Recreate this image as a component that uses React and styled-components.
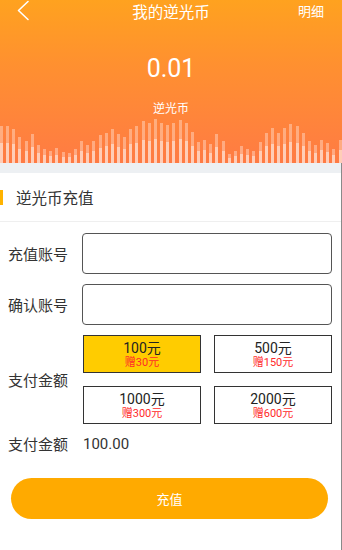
import React, { useState } from "react";
import styled, { createGlobalStyle } from "styled-components";

const GlobalStyle = createGlobalStyle`
  html, body { margin: 0; padding: 0; background: #fff; }
  body { font-family: Roboto, "Noto Sans CJK SC", "Noto Sans", sans-serif; }
  * { box-sizing: border-box; }
`;

const Page = styled.div`
  width: 342px;
  min-height: 550px;
  background: #fff;
  display: flex;
  flex-direction: column;
`;

const Header = styled.header`
  height: 163px;
  background: linear-gradient(180deg, #ffa21f 0%, #ff9030 40%, #ff7b44 100%);
  display: flex;
  flex-direction: column;
  color: #fff;
`;

const TopBar = styled.div`
  height: 22px;
  position: relative;
  display: flex;
  align-items: center;
  justify-content: center;
`;

const BackIcon = styled.svg`
  position: absolute;
  left: 16px;
  top: 0;
`;

const Title = styled.div`
  font-family: "Noto Sans CJK SC", sans-serif;
  font-size: 15.5px;
  line-height: 20px;
  color: #fff;
`;

const Detail = styled.div`
  position: absolute;
  right: 18px;
  top: 1px;
  font-family: "Noto Sans CJK SC", sans-serif;
  font-size: 13px;
  line-height: 20px;
`;

const Balance = styled.div`
  margin-top: 32px;
  text-align: center;
  font-size: 25px;
  line-height: 30px;
`;

const BalanceLabel = styled.div`
  margin-top: 16px;
  text-align: center;
  font-family: "Noto Sans CJK SC", sans-serif;
  font-size: 12px;
  line-height: 16px;
`;

const Bars = styled.div`
  flex: 1;
  display: flex;
  align-items: flex-end;
  justify-content: space-between;
`;

const Bar = styled.div`
  width: 3px;
  background: linear-gradient(
    to top,
    rgba(255, 255, 255, 0.62) 0%,
    rgba(255, 255, 255, 0.62) 55%,
    rgba(255, 255, 255, 0.34) 55%,
    rgba(255, 255, 255, 0.34) 100%
  );
`;

const Body = styled.div`
  flex: 1;
  display: flex;
  flex-direction: column;
  border-right: 1px solid #8a8a8a;
`;

const Band = styled.div`
  height: 10px;
  background: #edf0f3;
`;

const SectionTitle = styled.div`
  height: 49px;
  display: flex;
  align-items: center;
  border-bottom: 1px solid #efefef;
  font-family: "Noto Sans CJK SC", sans-serif;
  font-size: 15.5px;
  color: #333;
  &::before {
    content: "";
    width: 3px;
    height: 15px;
    background: #ffb300;
    margin-right: 13px;
  }
`;

const Form = styled.div`
  margin-top: 11px;
  padding: 0 9px 0 8px;
  display: flex;
  flex-direction: column;
  gap: 10px;
`;

const Row = styled.div`
  display: grid;
  grid-template-columns: 74px 1fr;
  align-items: center;
`;

const Label = styled.div`
  font-family: "Noto Sans CJK SC", sans-serif;
  font-size: 15px;
  color: #333;
`;

const Input = styled.input`
  height: 41px;
  border: 1px solid #555;
  border-radius: 4px;
  padding: 0 8px;
  font-size: 14px;
  outline: none;
  width: 100%;
`;

const Grid = styled.div`
  display: grid;
  grid-template-columns: 1fr 1fr;
  gap: 13px;
  padding-left: 1px;
`;

const Option = styled.div`
  height: 38px;
  border: 1px solid #333;
  background: ${(p) => (p.$active ? "#ffcc00" : "#fff")};
  display: flex;
  flex-direction: column;
  align-items: center;
  justify-content: center;
  cursor: pointer;
`;

const OptionPrice = styled.div`
  font-size: 14px;
  line-height: 16px;
  color: #222;
  font-family: Roboto, "Noto Sans CJK SC", sans-serif;
`;

const OptionGift = styled.div`
  font-size: 11px;
  line-height: 13px;
  color: #ff2a2a;
  font-family: Roboto, "Noto Sans CJK SC", sans-serif;
`;

const Summary = styled.div`
  display: grid;
  grid-template-columns: 74px 1fr;
  align-items: center;
  height: 21px;
  margin-top: 9px;
  padding-left: 8px;
`;

const Value = styled.div`
  font-size: 15px;
  color: #333;
  padding-left: 1px;
`;

const SubmitButton = styled.button`
  margin: 24px 13px 0 11px;
  height: 41px;
  border: none;
  border-radius: 21px;
  background: #ffaa00;
  color: #fff;
  font-family: "Noto Sans CJK SC", sans-serif;
  font-size: 13px;
  cursor: pointer;
`;

const heights = [
  37, 37, 34, 26, 22, 29, 18, 14, 12, 15, 11, 10, 14, 22, 18, 22, 28, 30, 34,
  29, 26, 34, 37, 42, 40, 44, 40, 38, 40, 43, 40, 31, 21, 23, 19, 29, 22, 9,
  12, 17, 14, 12, 21, 30, 35, 30, 35, 39, 37, 30, 22, 18, 23, 20, 14, 23,
];

const options = [
  { price: "100元", gift: "赠30元", value: 100 },
  { price: "500元", gift: "赠150元", value: 500 },
  { price: "1000元", gift: "赠300元", value: 1000 },
  { price: "2000元", gift: "赠600元", value: 2000 },
];

export default function App() {
  const [selected, setSelected] = useState(0);
  return (
    <Page>
      <GlobalStyle />
      <Header>
        <TopBar>
          <BackIcon width="14" height="22" viewBox="0 0 14 22">
            <polyline
              points="12,1.5 2.5,10.5 12,19.5"
              fill="none"
              stroke="#fff"
              strokeWidth="1.6"
              strokeLinecap="round"
              strokeLinejoin="round"
            />
          </BackIcon>
          <Title>我的逆光币</Title>
          <Detail>明细</Detail>
        </TopBar>
        <Balance>0.01</Balance>
        <BalanceLabel>逆光币</BalanceLabel>
        <Bars>
          {heights.map((h, i) => (
            <Bar key={i} style={{ height: h }} />
          ))}
        </Bars>
      </Header>
      <Body>
        <Band />
        <SectionTitle>逆光币充值</SectionTitle>
        <Form>
          <Row>
            <Label>充值账号</Label>
            <Input />
          </Row>
          <Row>
            <Label>确认账号</Label>
            <Input />
          </Row>
          <Row>
            <Label>支付金额</Label>
            <Grid>
              {options.map((o, i) => (
                <Option
                  key={o.price}
                  $active={selected === i}
                  onClick={() => setSelected(i)}
                >
                  <OptionPrice>{o.price}</OptionPrice>
                  <OptionGift>{o.gift}</OptionGift>
                </Option>
              ))}
            </Grid>
          </Row>
        </Form>
        <Summary>
          <Label>支付金额</Label>
          <Value>{options[selected].value.toFixed(2)}</Value>
        </Summary>
        <SubmitButton>充值</SubmitButton>
      </Body>
    </Page>
  );
}
